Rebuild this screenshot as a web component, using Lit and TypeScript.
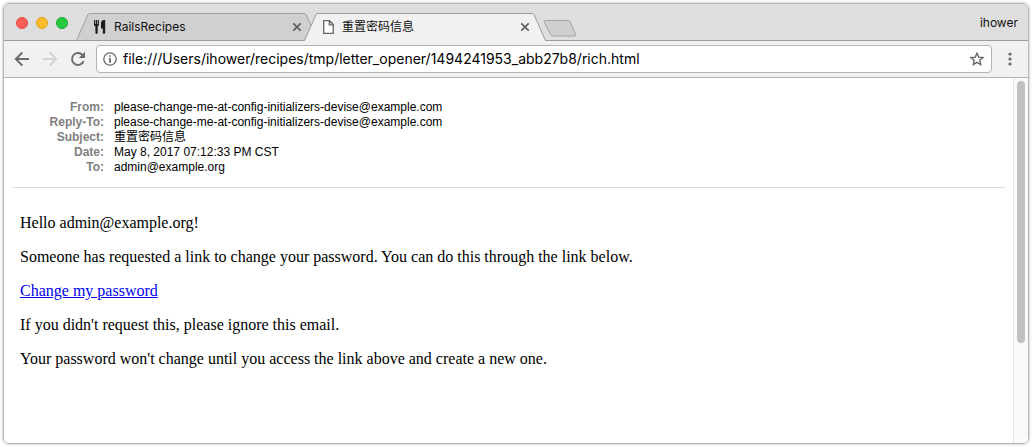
import { LitElement, html, css, svg } from "lit";
import { customElement, property } from "lit/decorators.js";

const closeIcon = html`<svg width="10" height="10" viewBox="0 0 10 10" aria-hidden="true">
  <path d="M1.3 1.3 8.7 8.7M8.7 1.3 1.3 8.7" stroke="#5e5e5e" stroke-width="1.7" fill="none" />
</svg>`;

const cutleryIcon = html`<svg width="12" height="14" viewBox="0 0 12 14" aria-hidden="true">
  <path
    fill="#1c1c1c"
    d="M0 0h1.1v4h.7V0h1.2v4h.7V0h1.2v4.6c0 .9-.5 1.5-1.2 1.8v6.4c0 1.5-2.3 1.5-2.3 0V6.4C.5 6.1 0 5.5 0 4.6zM11.2 0v12.8c0 1.5-2.4 1.5-2.4 0V8.5H7V3C7 1.2 8.5 0 10 0z"
  />
</svg>`;

const pageIcon = html`<svg width="12" height="14" viewBox="0 0 12 14" aria-hidden="true">
  <path d="M1.7.7h5.8l3.800 3.900v8.700H1.700zM7.300.7v4.100h4" fill="#fff" stroke="#666" stroke-width="1.3" />
</svg>`;

@customElement("browser-tab")
class BrowserTab extends LitElement {
  @property() label = "";
  @property() icon: "cutlery" | "page" = "page";
  @property({ type: Boolean, reflect: true }) active = false;

  static styles = css`
    :host {
      --fill: #d0d0d0;
      display: flex;
      flex: 0 1 242px;
      min-width: 0;
      height: 28px;
      position: relative;
    }
    :host([active]) {
      --fill: #f1f1f1;
      z-index: 1;
    }
    .edge {
      flex: none;
      display: block;
    }
    .shape {
      fill: var(--fill);
    }
    .line {
      fill: none;
      stroke: #9b9b9b;
    }
    .body {
      flex: 1;
      min-width: 0;
      display: flex;
      align-items: center;
      box-sizing: border-box;
      height: 28px;
      padding-left: 4px;
      border-top: 1px solid #9b9b9b;
      border-bottom: 1px solid #9b9b9b;
      background: var(--fill);
    }
    :host([active]) .body {
      border-bottom-color: var(--fill);
    }
    .icon {
      flex: none;
      display: flex;
      width: 20px;
    }
    .label {
      flex: 1;
      overflow: hidden;
      white-space: nowrap;
    }
    button {
      display: flex;
      padding: 2px;
      border: 0;
      background: none;
    }
  `;

  private edge(flip: boolean) {
    const base = this.active ? 28 : 27;
    const shape = svg`<g transform=${flip ? "translate(14 0) scale(-1 1)" : ""}>
      <path class="shape" d="M.5 ${base} L1 27 L12.5 1.5 L14 .5 V${base}Z" />
      <path class="line" d="M.5 27.5 L12 1.5 Q12.5 .5 14 .5" />
    </g>`;
    return html`<svg class="edge" width="14" height="28" viewBox="0 0 14 28" aria-hidden="true">${shape}</svg>`;
  }

  render() {
    return html`
      ${this.edge(false)}
      <div class="body">
        <span class="icon">${this.icon === "cutlery" ? cutleryIcon : pageIcon}</span>
        <span class="label">${this.label}</span>
        <button aria-label="Close tab">${closeIcon}</button>
      </div>
      ${this.edge(true)}
    `;
  }
}

@customElement("mail-message")
class MailMessage extends LitElement {
  static styles = css`
    :host {
      display: block;
      padding: 8px;
      color: #000;
      font: 16px/18px "Liberation Serif", serif;
    }
    .headers {
      display: grid;
      grid-template-columns: 92px 1fr;
      column-gap: 10px;
      margin: 0;
      padding: 14px 0 12px;
      border-bottom: 1px solid #dcdcdc;
      font: 12px/15px "Liberation Sans", "Noto Sans CJK SC", sans-serif;
    }
    dt {
      color: #808080;
      font-weight: bold;
      text-align: right;
    }
    dd {
      margin: 0;
    }
    .body {
      padding: 10px 8px;
    }
    p {
      margin: 16px 0;
    }
    a {
      color: #0000ee;
    }
  `;

  private headers = [
    ["From:", "please-change-me-at-config-initializers-devise@example.com"],
    ["Reply-To:", "please-change-me-at-config-initializers-devise@example.com"],
    ["Subject:", "重置密码信息"],
    ["Date:", "May 8, 2017 07:12:33 PM CST"],
    ["To:", "admin@example.org"],
  ];

  render() {
    return html`
      <dl class="headers">
        ${this.headers.map(([name, value]) => html`<dt>${name}</dt><dd>${value}</dd>`)}
      </dl>
      <div class="body">
        <p>Hello admin@example.org!</p>
        <p>Someone has requested a link to change your password. You can do this through the link below.</p>
        <p><a href="#">Change my password</a></p>
        <p>If you didn't request this, please ignore this email.</p>
        <p>Your password won't change until you access the link above and create a new one.</p>
      </div>
    `;
  }
}

@customElement("app-root")
class AppRoot extends LitElement {
  static styles = css`
    :host {
      display: flex;
      box-sizing: border-box;
      min-height: 100vh;
      padding: 3px;
      background: #fff;
      color: #111;
      font: 12px/16px Inter, "Noto Sans CJK SC", sans-serif;
    }
    .window {
      flex: 1;
      min-width: 0;
      display: flex;
      flex-direction: column;
      border: 1px solid #b4b4b4;
      border-radius: 6px;
      overflow: hidden;
      box-shadow: 0 0 3px #b0b0b0;
    }
    .titlebar {
      display: flex;
      align-items: flex-end;
      height: 37px;
      background: linear-gradient(#9b9b9b, #9b9b9b) bottom / 100% 1px no-repeat #dedede;
    }
    .lights {
      align-self: flex-start;
      display: flex;
      gap: 8px;
      padding: 13px 8px 0 12px;
    }
    .light {
      box-sizing: border-box;
      width: 12px;
      height: 12px;
      padding: 0;
      border: 1px solid #e2463f;
      border-radius: 50%;
      background: #ff5f57;
    }
    .minimize {
      border-color: #e1a116;
      background: #ffbd2e;
    }
    .zoom {
      border-color: #12ac28;
      background: #28ca42;
    }
    .tabs {
      flex: 1;
      min-width: 0;
      display: flex;
      align-items: flex-end;
    }
    browser-tab + browser-tab {
      margin-left: -14px;
    }
    .new-tab {
      display: flex;
      margin: 0 0 4px -3px;
      padding: 0;
      border: 0;
      background: none;
    }
    .user {
      align-self: center;
      padding: 0 10px;
      border: 0;
      background: none;
      color: #111;
      font: inherit;
    }
    .toolbar {
      display: flex;
      align-items: center;
      height: 36px;
      padding: 0 4px;
      background: #f1f1f1;
      border-bottom: 1px solid #b4b4b4;
    }
    .tool {
      display: flex;
      justify-content: center;
      width: 28px;
      padding: 0;
      border: 0;
      background: none;
    }
    .address {
      flex: 1;
      min-width: 0;
      display: flex;
      align-items: center;
      box-sizing: border-box;
      height: 28px;
      margin: 0 4px;
      padding: 0 0 0 6px;
      gap: 6px;
      border: 1px solid #b4b4b4;
      border-radius: 4px;
      background: #fff;
    }
    .url {
      flex: 1;
      min-width: 0;
      padding: 0;
      border: 0;
      outline: 0;
      background: none;
      color: #000;
      font: 14px/20px Inter, sans-serif;
    }
    .viewport {
      flex: 1;
      display: flex;
      background: #fff;
    }
    mail-message {
      flex: 1;
      min-width: 0;
    }
    .scrollbar {
      box-sizing: border-box;
      width: 15px;
      padding: 3px;
      border-left: 1px solid #e6e6e6;
      background: #fafafa;
    }
    .thumb {
      width: 8px;
      height: 73%;
      border-radius: 4px;
      background: #c1c1c1;
    }
  `;

  render() {
    return html`
      <main class="window">
        <div class="titlebar">
          <div class="lights">
            <button class="light" aria-label="Close"></button>
            <button class="light minimize" aria-label="Minimize"></button>
            <button class="light zoom" aria-label="Zoom"></button>
          </div>
          <div class="tabs">
            <browser-tab label="RailsRecipes" icon="cutlery"></browser-tab>
            <browser-tab label="重置密码信息" icon="page" active></browser-tab>
            <button class="new-tab" aria-label="New tab">
              <svg width="34" height="17" viewBox="0 0 34 17" aria-hidden="true">
                <path
                  d="M2.5.5H25q1.5 0 2.2 1.5L32.5 14q.8 2-.8 2H10q-1.8 0-2.5-1.5L1.3 2Q.6.5 2.5.5Z"
                  fill="#cfcfcf"
                  stroke="#a3a3a3"
                />
              </svg>
            </button>
          </div>
          <button class="user">ihower</button>
        </div>
        <div class="toolbar">
          <button class="tool" aria-label="Back">
            <svg width="16" height="16" viewBox="0 0 16 16" fill="none" stroke="#6a6a6a" stroke-width="1.9">
              <path d="M15 8H2.2M8.3 1.5 1.8 8l6.5 6.5" />
            </svg>
          </button>
          <button class="tool" aria-label="Forward">
            <svg width="16" height="16" viewBox="0 0 16 16" fill="none" stroke="#d3d3d3" stroke-width="1.9">
              <path d="M1 8h12.8M7.7 1.5 14.2 8l-6.5 6.5" />
            </svg>
          </button>
          <button class="tool" aria-label="Reload">
            <svg width="16" height="16" viewBox="0 0 16 16">
              <path d="M13.6 10.2A6 6 0 1 1 12.4 3.9" fill="none" stroke="#6a6a6a" stroke-width="1.9" />
              <path d="M15 .8V7H8.8z" fill="#6a6a6a" />
            </svg>
          </button>
          <div class="address">
            <svg width="14" height="14" viewBox="0 0 14 14" aria-hidden="true">
              <circle cx="7" cy="7" r="6.2" fill="none" stroke="#666" stroke-width="1.3" />
              <path d="M6.2 3.2h1.6v1.6H6.2zM6.2 6h1.6v4.8H6.2z" fill="#5a5a5a" />
            </svg>
            <input
              class="url"
              type="text"
              aria-label="Address"
              spellcheck="false"
              value="file:///Users/ihower/recipes/tmp/letter_opener/1494241953_abb27b8/rich.html"
            />
            <button class="tool" aria-label="Bookmark this page">
              <svg width="16" height="16" viewBox="0 0 16 16">
                <path
                  d="m8 2.2 1.7 3.9 4.3.4-3.2 2.8.9 4.2L8 11.3l-3.7 2.2.9-4.2L2 6.5l4.3-.4z"
                  fill="none"
                  stroke="#666"
                  stroke-width="1.4"
                />
              </svg>
            </button>
          </div>
          <button class="tool" aria-label="Menu">
            <svg width="4" height="14" viewBox="0 0 4 14" fill="#666">
              <circle cx="2" cy="2" r="1.6" />
              <circle cx="2" cy="7" r="1.6" />
              <circle cx="2" cy="12" r="1.6" />
            </svg>
          </button>
        </div>
        <div class="viewport">
          <mail-message></mail-message>
          <div class="scrollbar"><div class="thumb"></div></div>
        </div>
      </main>
    `;
  }
}
